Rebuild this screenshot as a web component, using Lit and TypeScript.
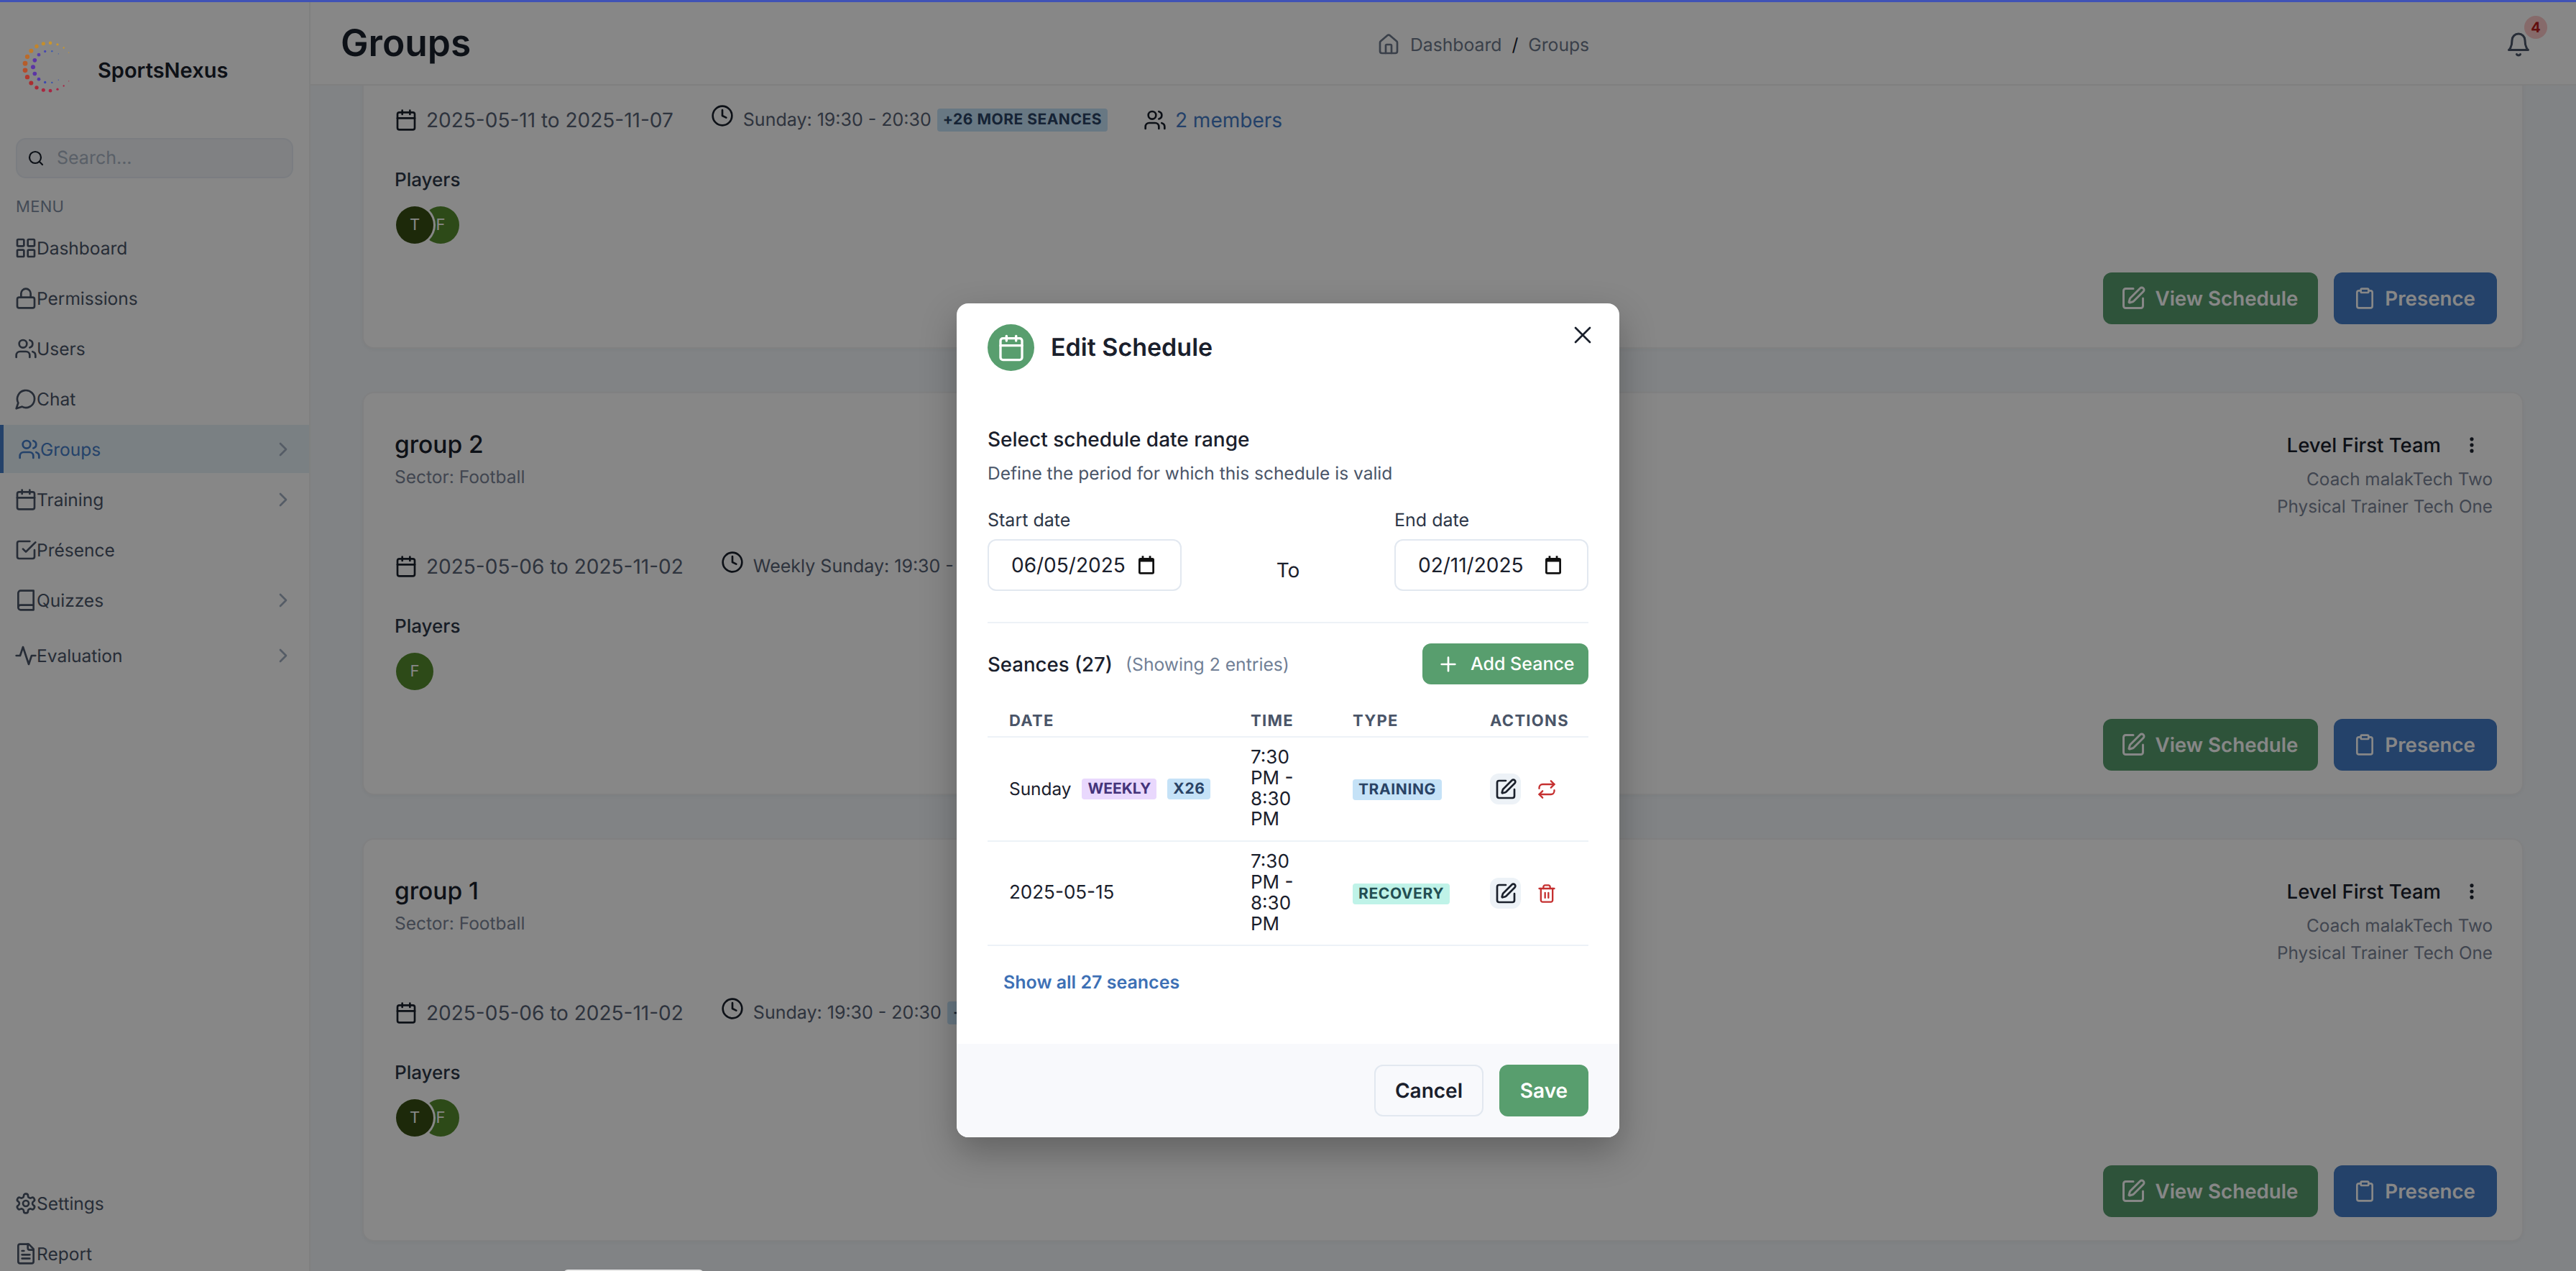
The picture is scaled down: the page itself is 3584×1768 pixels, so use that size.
import { LitElement, html, css, svg } from "lit";
import { customElement } from "lit/decorators.js";

const P: Record<string, any> = {
  grid: svg`<rect x="3" y="3" width="7" height="7" rx="1"/><rect x="14" y="3" width="7" height="7" rx="1"/><rect x="14" y="14" width="7" height="7" rx="1"/><rect x="3" y="14" width="7" height="7" rx="1"/>`,
  lock: svg`<rect x="3" y="11" width="18" height="11" rx="2"/><path d="M7 11V7a5 5 0 0 1 10 0v4"/>`,
  users: svg`<path d="M16 21v-2a4 4 0 0 0-4-4H6a4 4 0 0 0-4 4v2"/><circle cx="9" cy="7" r="4"/><path d="M22 21v-2a4 4 0 0 0-3-3.87"/><path d="M16 3.13a4 4 0 0 1 0 7.75"/>`,
  chat: svg`<path d="M7.9 20A9 9 0 1 0 4 16.1L2 22Z"/>`,
  cal: svg`<path d="M8 2v4"/><path d="M16 2v4"/><rect x="3" y="4" width="18" height="18" rx="2"/><path d="M3 10h18"/>`,
  check: svg`<path d="m9 11 3 3L22 4"/><path d="M21 12v7a2 2 0 0 1-2 2H5a2 2 0 0 1-2-2V5a2 2 0 0 1 2-2h11"/>`,
  book: svg`<path d="M4 19.5v-15A2.5 2.5 0 0 1 6.5 2H20v20H6.5a2.5 2.5 0 0 1 0-5H20"/>`,
  activity: svg`<path d="M22 12h-4l-3 9L9 3l-3 9H2"/>`,
  chev: svg`<path d="m9 18 6-6-6-6"/>`,
  gear: svg`<path d="M12.22 2h-.44a2 2 0 0 0-2 2v.18a2 2 0 0 1-1 1.73l-.43.25a2 2 0 0 1-2 0l-.15-.08a2 2 0 0 0-2.73.73l-.22.38a2 2 0 0 0 .73 2.73l.15.1a2 2 0 0 1 1 1.72v.51a2 2 0 0 1-1 1.74l-.15.09a2 2 0 0 0-.73 2.73l.22.38a2 2 0 0 0 2.73.73l.15-.08a2 2 0 0 1 2 0l.43.25a2 2 0 0 1 1 1.73V20a2 2 0 0 0 2 2h.44a2 2 0 0 0 2-2v-.18a2 2 0 0 1 1-1.73l.43-.25a2 2 0 0 1 2 0l.15.08a2 2 0 0 0 2.73-.73l.22-.39a2 2 0 0 0-.73-2.73l-.15-.08a2 2 0 0 1-1-1.74v-.5a2 2 0 0 1 1-1.74l.15-.09a2 2 0 0 0 .73-2.73l-.22-.38a2 2 0 0 0-2.73-.73l-.15.08a2 2 0 0 1-2 0l-.43-.25a2 2 0 0 1-1-1.73V4a2 2 0 0 0-2-2z"/><circle cx="12" cy="12" r="3"/>`,
  file: svg`<path d="M15 2H6a2 2 0 0 0-2 2v16a2 2 0 0 0 2 2h12a2 2 0 0 0 2-2V7Z"/><path d="M14 2v4a2 2 0 0 0 2 2h4"/><path d="M10 9H8"/><path d="M16 13H8"/><path d="M16 17H8"/>`,
  search: svg`<circle cx="11" cy="11" r="8"/><path d="m21 21-4.3-4.3"/>`,
  home: svg`<path d="M15 21v-8a1 1 0 0 0-1-1h-4a1 1 0 0 0-1 1v8"/><path d="M3 10a2 2 0 0 1 .709-1.528l7-5.999a2 2 0 0 1 2.582 0l7 5.999A2 2 0 0 1 21 10v9a2 2 0 0 1-2 2H5a2 2 0 0 1-2-2z"/>`,
  bell: svg`<path d="M6 8a6 6 0 0 1 12 0c0 7 3 9 3 9H3s3-2 3-9"/><path d="M10.3 21a1.94 1.94 0 0 0 3.4 0"/>`,
  more: svg`<circle cx="12" cy="5" r="1"/><circle cx="12" cy="12" r="1"/><circle cx="12" cy="19" r="1"/>`,
  clock: svg`<circle cx="12" cy="12" r="10"/><path d="M12 6v6l4 2"/>`,
  pen: svg`<path d="M12 3H5a2 2 0 0 0-2 2v14a2 2 0 0 0 2 2h14a2 2 0 0 0 2-2v-7"/><path d="M18.375 2.625a1 1 0 0 1 3 3l-9.013 9.014a2 2 0 0 1-.853.505l-2.873.84a.5.5 0 0 1-.62-.62l.84-2.873a2 2 0 0 1 .506-.852z"/>`,
  clip: svg`<rect x="8" y="2" width="8" height="4" rx="1" ry="1"/><path d="M16 4h2a2 2 0 0 1 2 2v14a2 2 0 0 1-2 2H6a2 2 0 0 1-2-2V6a2 2 0 0 1 2-2h2"/>`,
  plus: svg`<path d="M5 12h14"/><path d="M12 5v14"/>`,
  x: svg`<path d="M18 6 6 18"/><path d="m6 6 12 12"/>`,
  repeat: svg`<path d="m17 2 4 4-4 4"/><path d="M3 11v-1a4 4 0 0 1 4-4h14"/><path d="m7 22-4-4 4-4"/><path d="M21 13v1a4 4 0 0 1-4 4H3"/>`,
  trash: svg`<path d="M3 6h18"/><path d="M19 6v14c0 1-1 2-2 2H7c-1 0-2-1-2-2V6"/><path d="M8 6V4c0-1 1-2 2-2h4c1 0 2 1 2 2v2"/><path d="M10 11v6"/><path d="M14 11v6"/>`,
};
const ic = (n: string, s = 32, w = 2) =>
  html`<svg class="ic" width=${s} height=${s} viewBox="0 0 24 24" fill="none" stroke="currentColor" stroke-width=${w} stroke-linecap="round" stroke-linejoin="round">${P[n]}</svg>`;

const DOTS: [number, number, number, string][] = [
  [287, 218, 2, "#c9962e"], [266, 198, 3.5, "#c9962e"], [240, 184, 5, "#c9962e"], [210, 178, 7, "#c9962e"],
  [181, 181, 7.5, "#c48f2c"], [153, 192, 8, "#c3852b"], [130, 211, 9, "#bf7a2a"], [114, 235, 9.5, "#ba6b2a"],
  [105, 263, 10, "#b65d2a"], [105, 292, 10, "#b44c2b"], [114, 320, 9.5, "#b0392e"], [130, 345, 9, "#aa2d30"],
  [153, 364, 8, "#a82a38"], [181, 374, 7.5, "#a82840"], [210, 377, 7, "#a82644"], [240, 371, 5, "#a82648"],
  [266, 357, 3.5, "#a82648"], [287, 337, 2, "#a82648"],
  [244, 223, 2, "#3a5ab0"], [217, 212, 3.5, "#3a5ab0"], [188, 213, 5, "#4a4ab0"], [162, 227, 7, "#5a3fa8"],
  [145, 250, 8.5, "#5c35a5"], [138, 278, 9, "#5c35a5"], [145, 306, 8.5, "#5c35a5"], [162, 329, 7, "#5238a8"],
  [188, 342, 5, "#3a48b0"], [217, 343, 3.5, "#3550b0"], [244, 332, 2, "#3550b0"],
];

const NAV = [
  { i: "grid", t: "Dashboard" },
  { i: "lock", t: "Permissions" },
  { i: "users", t: "Users" },
  { i: "chat", t: "Chat" },
  { i: "users", t: "Groups", c: 1, a: 1 },
  { i: "cal", t: "Training", c: 1 },
  { i: "check", t: "Présence" },
  { i: "book", t: "Quizzes", c: 1 },
  { i: "activity", t: "Evaluation", c: 1, e: 1 },
];

const GROUPS = [
  { n: "group 3", r: "2025-05-11 to 2025-11-07", s: "Sunday: 19:30 - 20:30", b: true, p: ["T", "F"] },
  { n: "group 2", r: "2025-05-06 to 2025-11-02", s: "Weekly Sunday: 19:30 - 20:30", b: false, p: ["F"] },
  { n: "group 1", r: "2025-05-06 to 2025-11-02", s: "Sunday: 19:30 - 20:30", b: true, p: ["T", "F"] },
];

@customElement("app-root")
export class AppRoot extends LitElement {
  static styles = css`
    :host { display: block; position: relative; width: 3584px; height: 1768px; overflow: hidden; font-family: Inter, "Liberation Sans", sans-serif; color: #1a202c; background: #fff; text-rendering: geometricPrecision; }
    * { box-sizing: border-box; }
    .ic { display: block; flex: none; }
    .app { display: flex; height: 1768px; }
    .topline { position: absolute; left: 0; top: 0; right: 0; height: 3px; background: #4052b5; z-index: 60; }

    .side { width: 432px; flex: none; height: 1768px; display: flex; flex-direction: column; background: #fff; border-right: 2px solid #f0f1f2; }
    .brand { height: 192px; flex: none; display: flex; align-items: center; }
    .logo { position: relative; z-index: 55; margin: 0 0 0 30px; display: block; flex: none; transform: translateY(-3.5px); }
    .brand b { margin-left: 36px; font-size: 29px; font-weight: 600; color: #1a202c; line-height: 40px; transform: translateY(2px); }
    .search { margin: 0 22px; height: 56px; flex: none; border: 2px solid #e8edf3; background: #f1f4f8; border-radius: 14px; display: flex; align-items: center; padding-left: 14px; color: #1a202c; font-size: 25px; }
    .search span { color: #aab5c4; margin-left: 17px; }
    .menu { margin: 27px 0 0 22px; height: 26px; line-height: 26px; font-size: 22px; color: #7f8ea3; letter-spacing: 0.3px; flex: none; }
    .nav { margin-top: 10px; flex: none; }
    .item { height: 67px; margin-bottom: 3px; display: flex; align-items: center; padding: 0 20px; font-size: 24.5px; color: #4a5568; }
    .item.a { background: #e6f1f7; border-left: 5px solid #447dc8; color: #447dc8; }
    .item.e { margin-top: 10px; }
    .item .lab { flex: 1; margin-left: -1px; }
    .item .ch { color: #a0aec0; }
    .bottom { margin-top: auto; margin-bottom: -12px; flex: none; }

    .main { flex: 1; min-width: 0; display: flex; flex-direction: column; background: #f3f7fb; }
    .head { height: 119px; flex: none; background: #fff; border-bottom: 2px solid #f0f0f0; display: flex; align-items: center; justify-content: space-between; padding: 6px 40px 0 42px; position: relative; z-index: 2; }
    .head h1 { margin: 0; font-size: 51.5px; line-height: 60px; font-weight: 600; color: #1a202c; transform: translateY(-2px); }
    .crumb { display: flex; align-items: center; font-size: 24.7px; color: #6f7a8c; }
    .crumb .sep { color: #1a202c; margin: 0 14px; }
    .crumb .ic { margin-right: 14px; }
    .bellb { position: relative; width: 72px; height: 72px; display: flex; align-items: center; justify-content: center; color: #4a5568; padding-right: 8px; }
    .badge { position: absolute; left: 40px; top: -4px; width: 32px; height: 32px; border-radius: 50%; background: #fec9c9; color: #b91c1c; font-size: 20px; font-weight: 700; display: flex; align-items: center; justify-content: center; }

    .scroll { flex: 1; min-height: 0; overflow: hidden; padding: 0 73px 0 72px; }
    .cards { margin-top: -195px; display: flex; flex-direction: column; gap: 60px; }
    .card { height: 561px; flex: none; background: #fff; border: 2px solid #f1f2f4; border-radius: 16px; padding: 48px 41px 32px 43px; display: flex; flex-direction: column; box-shadow: 0 2px 4px rgba(0,0,0,.03); }
    .top { display: flex; justify-content: space-between; align-items: flex-start; }
    .gname { font-size: 33.5px; font-weight: 500; line-height: 48px; color: #1a202c; }
    .sector { font-size: 24.5px; line-height: 40px; color: #7b8598; }
    .tr { text-align: right; }
    .lvl { display: flex; justify-content: flex-end; align-items: center; height: 48px; font-size: 27.5px; font-weight: 500; color: #1a202c; }
    .kb { width: 58px; margin-left: 14px; display: flex; justify-content: center; }
    .staff { margin-top: 4px; font-size: 24.3px; line-height: 38px; color: #7b8598; }
    .info { margin-top: 45px; height: 40px; display: flex; align-items: center; color: #586275; }
    .info .rng { font-size: 28px; margin-left: 12px; }
    .info .clk { margin-left: 52px; color: #1a202c; transform: translateY(-6px); }
    .info .sch { font-size: 25px; margin-left: 13px; }
    .pill { display: inline-block; margin-left: 8px; height: 32px; line-height: 32px; padding: 0 8px; border-radius: 4px; font-size: 21px; font-weight: 700; letter-spacing: .5px; background: #c5e2f7; color: #2a4365; white-space: nowrap; }
    .mem { margin-left: 50px; display: flex; align-items: center; }
    .mem .ic { color: #1a202c; }
    .mem span { margin-left: 12px; font-size: 28px; color: #447cc7; }
    .info .cal { color: #1a202c; }
    .pl { margin-top: 46px; font-size: 26px; font-weight: 500; line-height: 36px; color: #2d3748; }
    .avs { margin-top: 18px; display: flex; padding-left: 2px; height: 52px; }
    .av { width: 52px; height: 52px; border-radius: 50%; display: flex; align-items: center; justify-content: center; color: #fff; font-size: 22px; background: #558c2f; }
    .av.t { background: #374f13; box-shadow: 0 0 0 3px #fff; position: relative; z-index: 1; margin-right: -16px; }
    .acts { margin-top: auto; margin-right: -6px; display: flex; justify-content: flex-end; gap: 22px; }
    .btn { height: 72px; border-radius: 12px; color: #fff; font-size: 27.7px; font-weight: 600; display: flex; align-items: center; padding: 0 28px 0 24px; gap: 12px; }
    .btn.g { background: #589e6e; }
    .btn.b { background: #447dc8; padding: 0 30px 0 27px; }

    .overlay { position: absolute; inset: 0; background: rgba(0,0,0,.47); z-index: 50; display: flex; justify-content: center; align-items: flex-start; padding-top: 422px; }
    .peek { position: absolute; left: 784px; top: 1766px; width: 195px; height: 10px; background: #e8e8e8; border-radius: 6px 6px 0 0; z-index: 51; }
    .modal { position: relative; width: 922px; height: 1160px; background: #fff; border-radius: 16px; box-shadow: 0 20px 50px rgba(0,0,0,.28); display: flex; flex-direction: column; overflow: hidden; color: #1a202c; }
    .close { position: absolute; right: 31px; top: 24px; color: #1a202c; }
    .mbody { flex: 1; padding: 29px 43px 0 43px; }
    .mhead { display: flex; align-items: center; height: 65px; gap: 23px; }
    .circ { width: 65px; height: 65px; border-radius: 50%; background: #589e6e; color: #fff; display: flex; align-items: center; justify-content: center; }
    .mhead h2 { margin: 0; font-size: 34px; font-weight: 600; line-height: 48px; color: #1a202c; }
    .sel { margin-top: 75px; font-size: 28px; font-weight: 500; line-height: 40px; }
    .def { margin-top: 8px; font-size: 24.5px; line-height: 38px; color: #4a5568; }
    .dates { margin-top: 29px; display: flex; justify-content: space-between; }
    .fld label { display: block; font-size: 25px; line-height: 36px; color: #2d3748; }
    .inp { margin-top: 8px; width: 270px; height: 72px; border: 2px solid #e2e8f0; border-radius: 12px; display: flex; align-items: center; justify-content: space-between; font-size: 28px; padding: 0 36px 0 31px; color: #1a202c; }
    .inp svg { display: block; flex: none; }
    .to { align-self: flex-end; margin-bottom: 12px; font-size: 28px; line-height: 34px; }
    .hr { margin-top: 43px; height: 2px; background: #edf2f7; }
    .sh { margin-top: 28px; height: 57px; display: flex; align-items: center; }
    .sh b { font-size: 27.6px; font-weight: 500; }
    .sh i { font-style: normal; font-size: 24.7px; color: #718096; margin-left: 18px; flex: 1; }
    .add { height: 57px; width: 231px; border-radius: 12px; background: #589e6e; color: #fff; display: flex; align-items: center; font-size: 25px; font-weight: 500; padding-left: 20px; gap: 15px; }
    table { margin-top: 30px; width: 836px; border-collapse: separate; border-spacing: 0; table-layout: fixed; }
    th { height: 44px; border-bottom: 2px solid #edf2f7; padding: 0 0 0 30px; text-align: left; font-size: 22px; font-weight: 700; letter-spacing: 1.3px; color: #4a5568; }
    td { border-bottom: 2px solid #edf2f7; padding: 14px 30px; font-size: 26px; line-height: 28.8px; height: 145px; vertical-align: middle; color: #1a202c; }
    .dc { display: flex; align-items: center; gap: 15px; font-size: 24.4px; }
    .bd { display: inline-block; height: 29px; line-height: 29px; padding: 0 8px; border-radius: 4px; font-size: 21px; font-weight: 700; letter-spacing: .6px; white-space: nowrap; }
    .pu { background: #e9d8fd; color: #44337a; letter-spacing: 0; }
    .bl { background: #c5e2f7; color: #2a4365; }
    .te { background: #bff3e8; color: #234e52; }
    .ac { display: flex; align-items: center; }
    .edit { width: 43px; height: 43px; border-radius: 12px; background: #edf2f7; display: flex; align-items: center; justify-content: center; color: #1a202c; }
    .red { color: #c53030; margin-left: 22px; }
    .more { margin: 32px 0 0 22px; font-size: 25px; font-weight: 600; line-height: 38px; color: #3d70b5; }
    .foot { height: 130px; flex: none; background: #f8f9fc; display: flex; justify-content: flex-end; align-items: center; gap: 22px; padding: 0 43px; }
    .cancel { width: 152px; height: 72px; border: 2px solid #e2e8f0; border-radius: 12px; display: flex; align-items: center; justify-content: center; font-size: 28px; font-weight: 600; color: #1a202c; }
    .save { width: 124px; height: 72px; border-radius: 12px; background: #589e6e; color: #fff; display: flex; align-items: center; justify-content: center; font-size: 28px; font-weight: 600; }
  `;

  private navItem(n: any) {
    return html`<div class="item ${n.a ? "a" : ""} ${n.e ? "e" : ""}">
      ${ic(n.i)}<span class="lab">${n.t}</span>${n.c ? html`<span class="ch">${ic("chev")}</span>` : ""}
    </div>`;
  }

  private card(g: any) {
    return html`<div class="card">
      <div class="top">
        <div><div class="gname">${g.n}</div><div class="sector">Sector: Football</div></div>
        <div class="tr">
          <div class="lvl">Level First Team<span class="kb">${ic("more", 28, 2.4)}</span></div>
          <div class="staff">Coach malakTech Two<br />Physical Trainer Tech One</div>
        </div>
      </div>
      <div class="info">
        <span class="cal">${ic("cal")}</span><span class="rng">${g.r}</span>
        <span class="clk">${ic("clock")}</span><span class="sch">${g.s}</span>
        ${g.b ? html`<span class="pill">+26 MORE SEANCES</span>` : ""}
        <span class="mem">${ic("users")}<span>2 members</span></span>
      </div>
      <div class="pl">Players</div>
      <div class="avs">
        ${g.p.map((p: string) => html`<div class="av ${p === "T" ? "t" : ""}">${p}</div>`)}
      </div>
      <div class="acts">
        <div class="btn g">${ic("pen", 36)}View Schedule</div>
        <div class="btn b">${ic("clip", 32)}Presence</div>
      </div>
    </div>`;
  }

  private calGlyph() {
    return html`<svg width="22" height="26" viewBox="0 0 24 28"><path fill="#111" d="M5 0h3v3h8V0h3v3h2a3 3 0 0 1 3 3v19a3 3 0 0 1-3 3H3a3 3 0 0 1-3-3V6a3 3 0 0 1 3-3h2zM3 9v16h18V9z"/></svg>`;
  }

  render() {
    return html`
      <div class="topline"></div>
      <div class="app">
        <aside class="side">
          <div class="brand">
            <svg class="logo" width="70" height="75" viewBox="90 165 210 225">
              ${DOTS.map((d) => svg`<circle cx=${d[0]} cy=${d[1]} r=${d[2]} fill=${d[3]}></circle>`)}
            </svg>
            <b>SportsNexus</b>
          </div>
          <div class="search">${ic("search", 24, 2.2)}<span>Search...</span></div>
          <div class="menu">MENU</div>
          <div class="nav">${NAV.map((n) => this.navItem(n))}</div>
          <div class="bottom">
            ${this.navItem({ i: "gear", t: "Settings" })}
            ${this.navItem({ i: "file", t: "Report" })}
          </div>
        </aside>
        <div class="main">
          <header class="head">
            <h1>Groups</h1>
            <div class="crumb">${ic("home", 32)}<span>Dashboard</span><span class="sep">/</span><span>Groups</span></div>
            <div class="bellb">${ic("bell", 36)}<span class="badge">4</span></div>
          </header>
          <div class="scroll"><div class="cards">${GROUPS.map((g) => this.card(g))}</div></div>
        </div>
      </div>
      <div class="overlay">
        <div class="modal">
          <div class="close">${ic("x", 40, 1.6)}</div>
          <div class="mbody">
            <div class="mhead"><div class="circ">${ic("cal", 40)}</div><h2>Edit Schedule</h2></div>
            <div class="sel">Select schedule date range</div>
            <div class="def">Define the period for which this schedule is valid</div>
            <div class="dates">
              <div class="fld"><label>Start date</label><div class="inp"><span>06/05/2025</span>${this.calGlyph()}</div></div>
              <div class="to">To</div>
              <div class="fld"><label>End date</label><div class="inp"><span>02/11/2025</span>${this.calGlyph()}</div></div>
            </div>
            <div class="hr"></div>
            <div class="sh"><b>Seances (27)</b><i>(Showing 2 entries)</i><div class="add">${ic("plus", 32)}Add Seance</div></div>
            <table>
              <colgroup><col style="width:336px" /><col style="width:142px" /><col style="width:191px" /><col style="width:167px" /></colgroup>
              <thead><tr><th>DATE</th><th>TIME</th><th>TYPE</th><th>ACTIONS</th></tr></thead>
              <tbody>
                <tr>
                  <td><div class="dc"><span>Sunday</span><span class="bd pu">WEEKLY</span><span class="bd bl">X26</span></div></td>
                  <td>7:30 PM - 8:30 PM</td>
                  <td><span class="bd bl">TRAINING</span></td>
                  <td><div class="ac"><div class="edit">${ic("pen", 32)}</div><span class="red">${ic("repeat", 28)}</span></div></td>
                </tr>
                <tr>
                  <td>2025-05-15</td>
                  <td>7:30 PM - 8:30 PM</td>
                  <td><span class="bd te">RECOVERY</span></td>
                  <td><div class="ac"><div class="edit">${ic("pen", 32)}</div><span class="red">${ic("trash", 28)}</span></div></td>
                </tr>
              </tbody>
            </table>
            <div class="more">Show all 27 seances</div>
          </div>
          <div class="foot"><div class="cancel">Cancel</div><div class="save">Save</div></div>
        </div>
      </div>
      <div class="peek"></div>
    `;
  }
}
